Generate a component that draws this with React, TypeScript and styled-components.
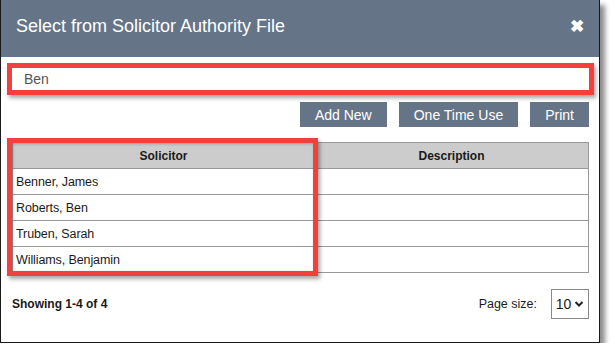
import styled, { createGlobalStyle } from 'styled-components';

const GlobalStyle = createGlobalStyle`
  html, body {
    margin: 0;
    padding: 0;
    background: #ffffff;
    font-family: 'Liberation Sans', Arial, sans-serif;
  }
`;

const Dialog = styled.div`
  width: 598px;
  height: 342px;
  border: 1px solid #1a1a1a;
  border-top: none;
  background: #ffffff;
  box-shadow: 5px 5px 5px rgba(0, 0, 0, 0.45);
  display: flex;
  flex-direction: column;
`;

const Header = styled.div`
  height: 57px;
  background: #657587;
  display: flex;
  align-items: center;
  justify-content: space-between;
  padding: 0 15px 4px 15px;
  box-sizing: border-box;
`;

const Title = styled.h1`
  margin: 0;
  color: #ffffff;
  font-size: 18px;
  font-weight: 400;
`;

const CloseButton = styled.span`
  color: #ffffff;
  font-size: 17px;
  font-weight: 700;
`;

const Body = styled.div`
  padding: 6px 10px 0 11px;
  display: flex;
  flex-direction: column;
`;

const SearchFrame = styled.div`
  margin: 0 -5px;
  border: 5px solid #f2403f;
  box-shadow: 2px 3px 4px rgba(0, 0, 0, 0.35);
  height: 22px;
  display: flex;
`;

const SearchInput = styled.input`
  flex: 1;
  border: none;
  outline: none;
  padding: 0 12px;
  font-family: inherit;
  font-size: 14px;
  color: #555555;
  background: #ffffff;
`;

const Toolbar = styled.div`
  display: flex;
  justify-content: flex-end;
  gap: 12px;
  margin-top: 7px;
`;

const ActionButton = styled.button`
  height: 25px;
  padding: 0 15px;
  border: none;
  background: #657587;
  color: #ffffff;
  font-family: inherit;
  font-size: 14px;
`;

const TableWrap = styled.div`
  position: relative;
  margin-top: 15px;
`;

const Table = styled.table`
  width: 100%;
  border-collapse: collapse;
  font-size: 12.5px;
  color: #1a1a1a;
`;

const HeadCell = styled.th<{ w?: string }>`
  height: 25px;
  padding: 0;
  background: #cccccc;
  border: 1px solid #999999;
  font-weight: 700;
  font-size: 12px;
  text-align: center;
  width: ${({ w }) => w || 'auto'};
`;

const Cell = styled.td`
  height: 25px;
  padding: 0 3px;
  border: 1px solid #999999;
  letter-spacing: -0.1px;
`;

const Highlight = styled.div`
  position: absolute;
  left: -5px;
  top: -4px;
  width: 301px;
  height: 128px;
  border: 5px solid #f2403f;
  box-shadow: 2px 3px 4px rgba(0, 0, 0, 0.35), inset 1px 1px 3px rgba(0, 0, 0, 0.25);
  pointer-events: none;
`;

const Footer = styled.div`
  display: flex;
  align-items: center;
  justify-content: space-between;
  margin-top: 16px;
  font-size: 12.5px;
  color: #1a1a1a;
`;

const Showing = styled.span`
  font-weight: 700;
  font-size: 12px;
`;

const PageSize = styled.div`
  display: flex;
  align-items: center;
  gap: 14px;
`;

const SizeSelect = styled.div`
  width: 36px;
  height: 28px;
  border: 1px solid #888888;
  display: flex;
  align-items: center;
  justify-content: center;
  gap: 3px;
  font-size: 14px;
`;

const rows = ['Benner, James', 'Roberts, Ben', 'Truben, Sarah', 'Williams, Benjamin'];

const App = () => (
  <>
    <GlobalStyle />
    <Dialog>
      <Header>
        <Title>Select from Solicitor Authority File</Title>
        <CloseButton>✖</CloseButton>
      </Header>
      <Body>
        <SearchFrame>
          <SearchInput defaultValue="Ben" />
        </SearchFrame>
        <Toolbar>
          <ActionButton>Add New</ActionButton>
          <ActionButton>One Time Use</ActionButton>
          <ActionButton>Print</ActionButton>
        </Toolbar>
        <TableWrap>
          <Table>
            <thead>
              <tr>
                <HeadCell w="301px">Solicitor</HeadCell>
                <HeadCell>Description</HeadCell>
              </tr>
            </thead>
            <tbody>
              {rows.map((name) => (
                <tr key={name}>
                  <Cell>{name}</Cell>
                  <Cell />
                </tr>
              ))}
            </tbody>
          </Table>
          <Highlight />
        </TableWrap>
        <Footer>
          <Showing>Showing 1-4 of 4</Showing>
          <PageSize>
            <span>Page size:</span>
            <SizeSelect>
              10
              <svg width="10" height="8" viewBox="0 0 10 8">
                <path d="M1.5 2l3.5 3.5L8.5 2" fill="none" stroke="#222" strokeWidth="2" />
              </svg>
            </SizeSelect>
          </PageSize>
        </Footer>
      </Body>
    </Dialog>
  </>
);

export default App;
